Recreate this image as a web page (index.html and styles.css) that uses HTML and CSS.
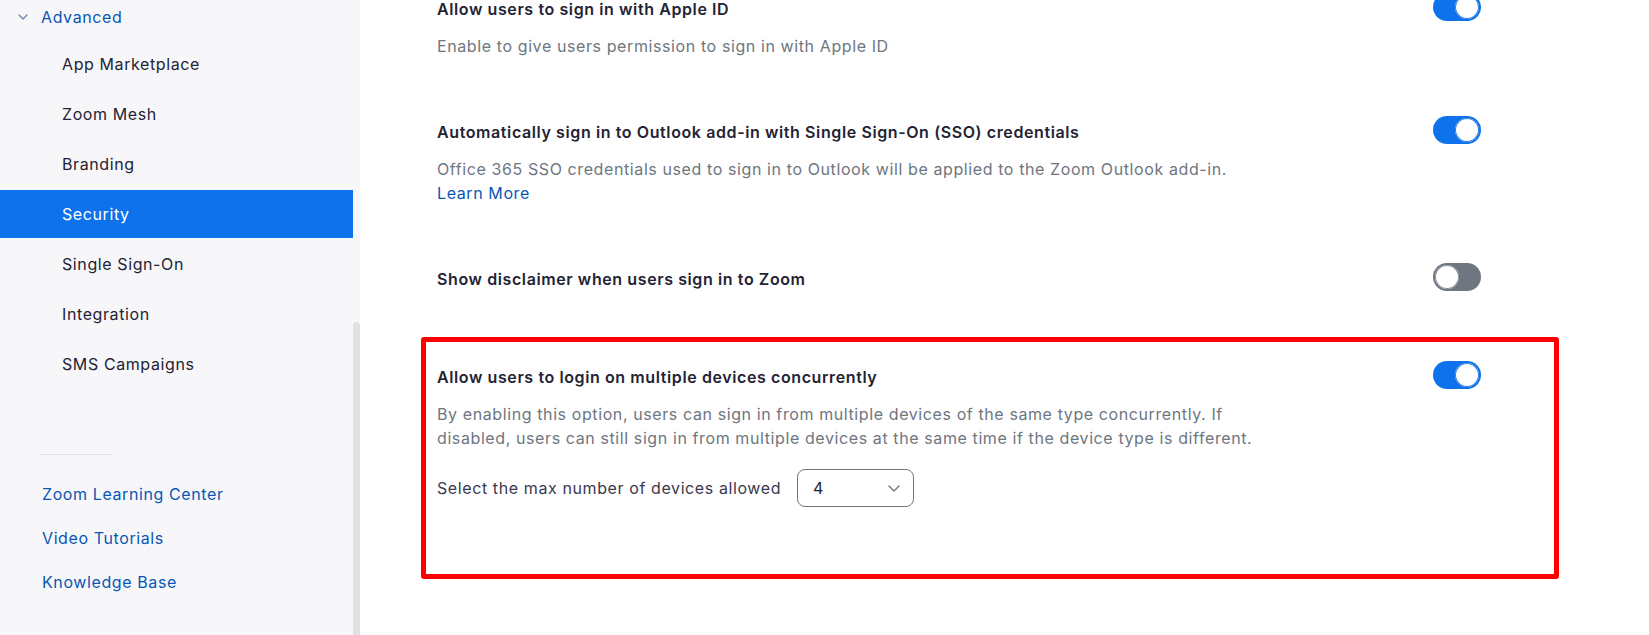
FILE: index.html
```html
<!DOCTYPE html>
<html lang="en">
<head>
<meta charset="utf-8">
<title>Security settings</title>
<link rel="stylesheet" href="styles.css">
</head>
<body>
<div class="page">
  <aside class="sidebar">
    <nav class="nav">
      <div class="nav-group">
        <svg class="chev" width="10" height="6" viewBox="0 0 10 6"><path d="M1 1l4 4 4-4" fill="none" stroke="#7a8aa6" stroke-width="1.5" stroke-linecap="round" stroke-linejoin="round"/></svg>
        <span>Advanced</span>
      </div>
      <ul class="nav-list">
        <li class="nav-item">App Marketplace</li>
        <li class="nav-item">Zoom Mesh</li>
        <li class="nav-item">Branding</li>
        <li class="nav-item active">Security</li>
        <li class="nav-item">Single Sign-On</li>
        <li class="nav-item">Integration</li>
        <li class="nav-item">SMS Campaigns</li>
      </ul>
      <div class="nav-divider"></div>
      <ul class="help-list">
        <li class="help-item">Zoom Learning Center</li>
        <li class="help-item">Video Tutorials</li>
        <li class="help-item">Knowledge Base</li>
      </ul>
    </nav>
    <div class="scroll-track"><div class="scroll-thumb"></div></div>
  </aside>

  <main class="main">
    <div class="settings">
      <section class="setting first">
        <div class="setting-text">
          <h3 class="setting-title">Allow users to sign in with Apple ID</h3>
          <p class="setting-desc">Enable to give users permission to sign in with Apple ID</p>
        </div>
        <span class="toggle on"><span class="knob"></span></span>
      </section>

      <section class="setting">
        <div class="setting-text">
          <h3 class="setting-title">Automatically sign in to Outlook add-in with Single Sign-On (SSO) credentials</h3>
          <p class="setting-desc">Office 365 SSO credentials used to sign in to Outlook will be applied to the Zoom Outlook add-in.<br><a class="link" href="#">Learn More</a></p>
        </div>
        <span class="toggle on"><span class="knob"></span></span>
      </section>

      <section class="setting">
        <div class="setting-text">
          <h3 class="setting-title">Show disclaimer when users sign in to Zoom</h3>
        </div>
        <span class="toggle off"><span class="knob"></span></span>
      </section>

      <section class="setting spaced">
        <div class="setting-text">
          <h3 class="setting-title">Allow users to login on multiple devices concurrently</h3>
          <p class="setting-desc">By enabling this option, users can sign in from multiple devices of the same type concurrently. If disabled, users can still sign in from multiple devices at the same time if the device type is different.</p>
          <div class="select-row">
            <span class="select-label">Select the max number of devices allowed</span>
            <span class="select">
              <span class="select-value">4</span>
              <svg class="select-chev" width="12" height="7" viewBox="0 0 12 7"><path d="M1 1l5 5 5-5" fill="none" stroke="#6e7680" stroke-width="1.4" stroke-linecap="round" stroke-linejoin="round"/></svg>
            </span>
          </div>
        </div>
        <span class="toggle on"><span class="knob"></span></span>
      </section>
    </div>
    <div class="highlight"></div>
  </main>
</div>
</body>
</html>
```

FILE: styles.css
```css
* { box-sizing: border-box; }
html, body { margin: 0; padding: 0; }
body {
  font-family: Inter, "Liberation Sans", Arial, sans-serif;
  letter-spacing: 0.6px;
  color: #232333;
  background: #fff;
  width: 1649px;
  height: 635px;
  overflow: hidden;
}
.page {
  display: flex;
  height: 635px;
}
.sidebar {
  display: flex;
  width: 360px;
  flex: none;
  background: #f7f7fa;
}
.nav {
  width: 353px;
  display: flex;
  flex-direction: column;
}
.nav-group {
  height: 34px;
  margin-bottom: 6px;
  display: flex;
  align-items: center;
  padding-left: 18px;
  gap: 13px;
  color: #0956b5;
  font-size: 16px;
}
.nav-list, .help-list {
  list-style: none;
  margin: 0;
  padding: 0;
}
.nav-item {
  height: 48px;
  margin-bottom: 2px;
  display: flex;
  align-items: center;
  padding-left: 62px;
  font-size: 16px;
  color: #232333;
}
.nav-item.active {
  background: #0e72ed;
  color: #fff;
}
.nav-divider {
  width: 72px;
  height: 1px;
  background: #e0e0e6;
  margin: 64px 0 17px 39px;
}
.help-item {
  height: 44px;
  display: flex;
  align-items: center;
  padding-left: 42px;
  font-size: 16px;
  color: #0956b5;
}
.scroll-track {
  width: 7px;
  padding-top: 322px;
  display: flex;
  flex-direction: column;
}
.scroll-thumb {
  flex: 1;
  background: #e1e1e3;
  border-radius: 4px 4px 0 0;
}
.main {
  flex: 1;
  position: relative;
  padding-left: 77px;
}
.settings {
  width: 1044px;
  margin-top: -3px;
}
.setting {
  display: flex;
  justify-content: space-between;
  align-items: flex-start;
  margin-top: 62px;
}
.setting.first { margin-top: 0; }
.setting.spaced { margin-top: 74px; }
.setting-text {
  display: flex;
  flex-direction: column;
  gap: 13px;
}
.setting-title {
  margin: 0;
  font-size: 16px;
  line-height: 24px;
  font-weight: 600;
  color: #232333;
}
.setting-desc {
  margin: 0;
  max-width: 840px;
  font-size: 16px;
  line-height: 24px;
  color: #6e7680;
}
.link {
  color: #0956b5;
  text-decoration: none;
}
.toggle {
  flex: none;
  width: 48px;
  height: 28px;
  margin-top: -4px;
  border-radius: 14px;
  display: flex;
  align-items: center;
  padding: 2px;
}
.toggle.on {
  background: #0e72ed;
  justify-content: flex-end;
}
.toggle.off {
  background: #6e7680;
  justify-content: flex-start;
}
.knob {
  width: 24px;
  height: 24px;
  border-radius: 50%;
  background: #fff;
}
.toggle.on .knob { box-shadow: 0 0 0 1px #2a7fe8 inset; }
.toggle.off .knob { box-shadow: 0 0 0 1px #8a909a inset; }
.select-row {
  display: flex;
  align-items: center;
  gap: 16px;
  margin-top: 6px;
}
.select-label {
  font-size: 16px;
  color: #39394d;
}
.select {
  width: 117px;
  height: 38px;
  border: 1px solid #6e7680;
  border-radius: 8px;
  display: flex;
  align-items: center;
  justify-content: space-between;
  padding: 0 13px 0 15px;
  font-size: 16px;
  color: #232333;
}
.highlight {
  position: absolute;
  left: 61px;
  top: 337px;
  width: 1138px;
  height: 242px;
  border: 5px solid #ff0000;
  border-radius: 3px;
  pointer-events: none;
}
```
